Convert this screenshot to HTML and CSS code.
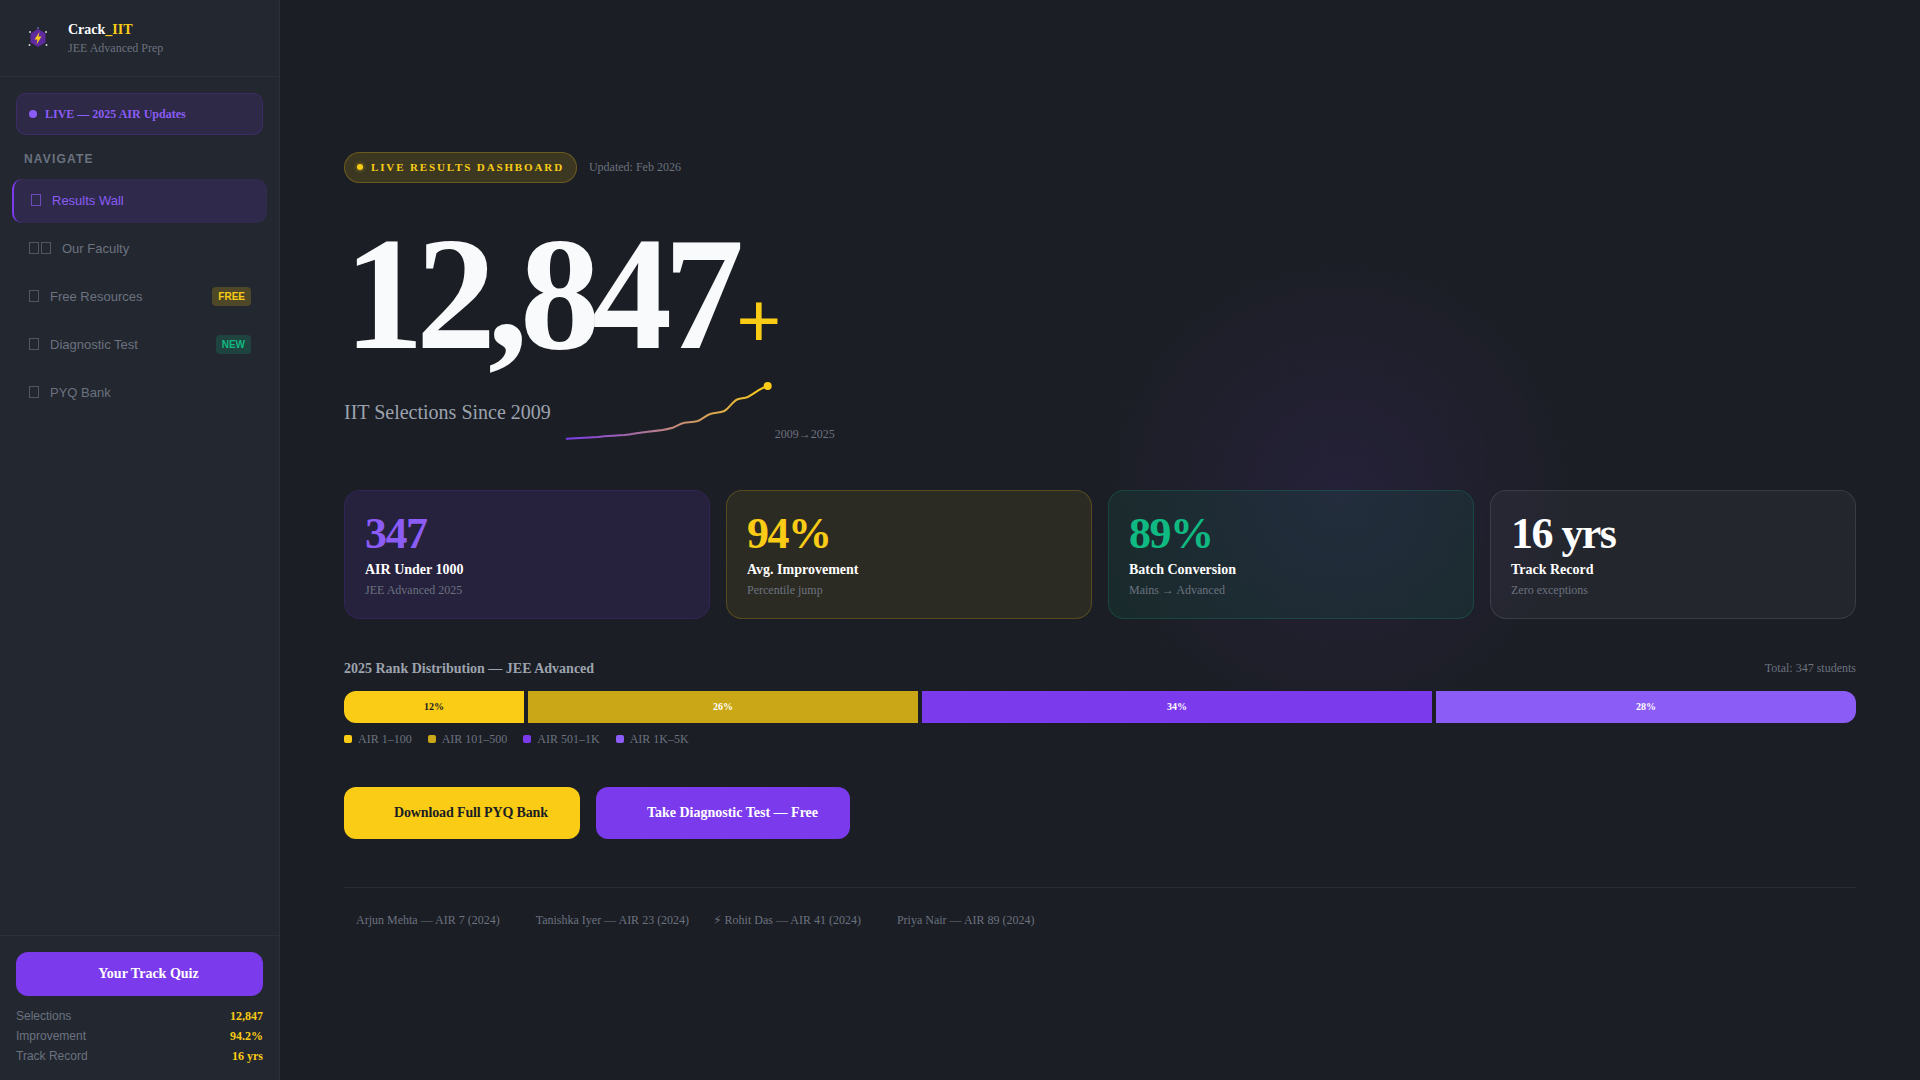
FILE: index.html
```html
<!DOCTYPE html>
<html lang="en">
<head>
    <meta charset="UTF-8">
    <title>Crack_IIT Results</title>
    <link rel="stylesheet" href="styles.css">
</head>
<body>
    <aside class="sidebar">
        <div class="brand">
            <svg class="brand-logo" viewBox="0 0 24 24" width="24" height="24">
                <polygon points="12,3 19.5,7.5 19.5,16.5 12,21 4.5,16.5 4.5,7.5" fill="#5f2a9e"/>
                <polygon points="13.5,6 8.5,13.5 11.5,13.5 10.5,18.5 15.5,10.5 12.5,10.5" fill="#facc15"/>
                <circle cx="4" cy="6" r="1" fill="#d1d5db"/>
                <circle cx="20" cy="6" r="1" fill="#d1d5db"/>
                <circle cx="3.5" cy="19" r="1" fill="#d1d5db"/>
                <circle cx="20.5" cy="19" r="1" fill="#d1d5db"/>
                <circle cx="12" cy="2" r="0.8" fill="#a78bfa"/>
            </svg>
            <div>
                <div class="brand-name">Crack<span class="yellow">_IIT</span></div>
                <div class="brand-sub">JEE Advanced Prep</div>
            </div>
        </div>

        <div class="live-box"><span class="live-dot"></span>LIVE — 2025 AIR Updates</div>

        <div class="nav-title">NAVIGATE</div>
        <nav class="nav">
            <a href="#" class="nav-item active"><span class="nav-icon"><i class="tofu"></i></span>Results Wall</a>
            <a href="#" class="nav-item"><span class="nav-icon"><i class="tofu"></i><i class="tofu"></i></span>Our Faculty</a>
            <a href="#" class="nav-item"><span class="nav-icon"><i class="tofu"></i></span>Free Resources<span class="badge badge-free">FREE</span></a>
            <a href="#" class="nav-item"><span class="nav-icon"><i class="tofu"></i></span>Diagnostic Test<span class="badge badge-new">NEW</span></a>
            <a href="#" class="nav-item"><span class="nav-icon"><i class="tofu"></i></span>PYQ Bank</a>
        </nav>

        <div class="side-footer">
            <button class="quiz-btn">Your Track Quiz</button>
            <div class="side-stat"><span>Selections</span><b>12,847</b></div>
            <div class="side-stat"><span>Improvement</span><b>94.2%</b></div>
            <div class="side-stat"><span>Track Record</span><b>16 yrs</b></div>
        </div>
    </aside>

    <main class="main">
        <div class="pill-row">
            <span class="pill"><span class="pill-dot"></span>LIVE RESULTS DASHBOARD</span>
            <span class="updated">Updated: Feb 2026</span>
        </div>

        <div class="hero-num">12,847<span class="hero-plus">+</span></div>

        <div class="hero-sub">
            <span class="hero-text">IIT Selections Since 2009</span>
            <svg class="spark" viewBox="0 0 208 60" width="208" height="60">
                <defs>
                    <linearGradient id="sparkGrad" x1="0" y1="0" x2="1" y2="0">
                        <stop offset="0" stop-color="#7c3aed"/>
                        <stop offset="1" stop-color="#facc15"/>
                    </linearGradient>
                </defs>
                <path d="M1.7 56.7 L32.7 55 C42 54 50 53.8 59.3 53 C68 52 74 50.5 82.7 49.7 C92 48.8 100 48 107.7 45.7 C112 44 115 41.5 119.3 40.7 C124 40 128 40.5 132.7 39 C138 37 141 33 146 31.7 C151 30.5 155 31 159.3 29 C165 26 167 19.5 172.7 17.3 C176 16 179 16.5 182.7 15 C189 12 195 6 202.7 4" fill="none" stroke="url(#sparkGrad)" stroke-width="2" stroke-linecap="round"/>
                <circle cx="202.7" cy="4" r="4" fill="#facc15"/>
            </svg>
            <span class="spark-label">2009→2025</span>
        </div>

        <section class="cards">
            <div class="card card-purple">
                <div class="card-num">347</div>
                <div class="card-label">AIR Under 1000</div>
                <div class="card-sub">JEE Advanced 2025</div>
            </div>
            <div class="card card-yellow">
                <div class="card-num">94%</div>
                <div class="card-label">Avg. Improvement</div>
                <div class="card-sub">Percentile jump</div>
            </div>
            <div class="card card-green">
                <div class="card-num">89%</div>
                <div class="card-label">Batch Conversion</div>
                <div class="card-sub">Mains → Advanced</div>
            </div>
            <div class="card card-white">
                <div class="card-num">16 yrs</div>
                <div class="card-label">Track Record</div>
                <div class="card-sub">Zero exceptions</div>
            </div>
        </section>

        <section class="dist">
            <div class="dist-head">
                <span class="dist-title">2025 Rank Distribution — JEE Advanced</span>
                <span class="dist-total">Total: 347 students</span>
            </div>
            <div class="dist-bar">
                <div class="seg seg-1" style="flex: 12">12%</div>
                <div class="seg seg-2" style="flex: 26">26%</div>
                <div class="seg seg-3" style="flex: 34">34%</div>
                <div class="seg seg-4" style="flex: 28">28%</div>
            </div>
            <div class="legend">
                <span class="legend-item"><i class="swatch seg-1"></i>AIR 1–100</span>
                <span class="legend-item"><i class="swatch seg-2"></i>AIR 101–500</span>
                <span class="legend-item"><i class="swatch seg-3"></i>AIR 501–1K</span>
                <span class="legend-item"><i class="swatch seg-4"></i>AIR 1K–5K</span>
            </div>
        </section>

        <div class="actions">
            <a href="#" class="btn btn-yellow">Download Full PYQ Bank</a>
            <a href="#" class="btn btn-purple">Take Diagnostic Test — Free</a>
        </div>

        <div class="toppers">
            <span class="topper blank">Arjun Mehta — AIR 7 (2024)</span>
            <span class="topper blank">Tanishka Iyer — AIR 23 (2024)</span>
            <span class="topper"><span class="bolt">⚡&#xFE0E;</span> Rohit Das — AIR 41 (2024)</span>
            <span class="topper blank">Priya Nair — AIR 89 (2024)</span>
        </div>
    </main>
</body>
</html>
```

FILE: styles.css
```css
* {
    box-sizing: border-box;
}
body {
    margin: 0;
    height: 1080px;
    display: flex;
    overflow: hidden;
    background-color: #1b1e24;
    font-family: "Liberation Serif", serif;
    color: #ffffff;
}
a {
    text-decoration: none;
}

/* Sidebar */
.sidebar {
    width: 280px;
    flex-shrink: 0;
    display: flex;
    flex-direction: column;
    background-color: #23272f;
    border-right: 1px solid #2c3038;
}
.brand {
    height: 77px;
    display: flex;
    align-items: center;
    gap: 18px;
    padding: 0 0 0 26px;
    border-bottom: 1px solid #2c3038;
}
.brand-name {
    padding-top: 1px;
    font-size: 14px;
    font-weight: bold;
    line-height: 18px;
}
.yellow {
    color: #facc15;
}
.brand-sub {
    font-size: 12px;
    line-height: 18px;
    color: #6b7280;
}
.live-box {
    margin: 16px 16px 0;
    height: 42px;
    display: flex;
    align-items: center;
    gap: 8px;
    padding-left: 12px;
    font-size: 12px;
    font-weight: bold;
    color: #8b5cf6;
    background-color: rgba(124, 58, 237, 0.12);
    border: 1px solid rgba(124, 58, 237, 0.2);
    border-radius: 10px;
}
.live-dot {
    width: 8px;
    height: 8px;
    border-radius: 50%;
    background-color: #8b5cf6;
}
.nav-title {
    margin: 17px 0 13px 24px;
    font-family: "Liberation Sans", sans-serif;
    font-size: 12px;
    font-weight: bold;
    letter-spacing: 0.1em;
    line-height: 14px;
    color: #6b7280;
}
.nav {
    display: flex;
    flex-direction: column;
    gap: 4px;
    padding: 0 12px;
}
.nav-item {
    height: 44px;
    display: flex;
    align-items: center;
    gap: 10px;
    padding: 0 16px 2px;
    font-family: "Liberation Sans", sans-serif;
    font-size: 13px;
    color: #6b7280;
    border-radius: 10px;
}
.nav-item.active {
    color: #8b5cf6;
    background-color: rgba(124, 58, 237, 0.15);
    border-left: 2px solid #7c3aed;
}
/* missing-glyph boxes */
.nav-icon {
    display: flex;
}
.tofu {
    display: block;
    width: 10px;
    height: 12px;
    margin: 0 1px;
    border: 1px solid currentColor;
    opacity: 0.65;
}
.badge {
    margin-left: auto;
    padding: 3px 6px;
    font-size: 10px;
    font-weight: bold;
    line-height: 13px;
    border-radius: 4px;
}
.badge-free {
    color: #facc15;
    background-color: rgba(250, 204, 21, 0.2);
}
.badge-new {
    color: #10b981;
    background-color: rgba(16, 185, 129, 0.2);
}
.side-footer {
    margin-top: auto;
    padding: 16px 16px 14px;
    border-top: 1px solid #2c3038;
}
.quiz-btn {
    width: 100%;
    height: 44px;
    margin-bottom: 10px;
    padding: 0 0 0 18px;
    border: none;
    border-radius: 12px;
    font-family: "Liberation Serif", serif;
    font-size: 14px;
    font-weight: bold;
    color: #ffffff;
    background-color: #7c3aed;
}
.side-stat {
    height: 20px;
    display: flex;
    align-items: center;
    justify-content: space-between;
    font-family: "Liberation Sans", sans-serif;
    font-size: 12px;
    color: #6b7280;
}
.side-stat b {
    font-family: "Liberation Serif", serif;
    color: #facc15;
}

/* Main */
.main {
    flex: 1;
    min-width: 0;
    display: flex;
    flex-direction: column;
    justify-content: center;
    padding: 0 64px;
    background-color: #1b1e24;
    background-image:
        radial-gradient(circle 260px at 1060px 490px, rgba(124, 58, 237, 0.1), rgba(124, 58, 237, 0) 100%),
        linear-gradient(rgba(255, 255, 255, 0.005) 1px, transparent 1px),
        linear-gradient(90deg, rgba(255, 255, 255, 0.005) 1px, transparent 1px);
    background-size: auto, 40px 40px, 40px 40px;
}
.pill-row {
    display: flex;
    align-items: center;
    gap: 12px;
}
.pill {
    height: 31px;
    display: flex;
    align-items: center;
    gap: 8px;
    padding: 0 12px;
    font-size: 11px;
    font-weight: bold;
    letter-spacing: 0.17em;
    color: #facc15;
    background-color: rgba(250, 204, 21, 0.15);
    border: 1px solid rgba(250, 204, 21, 0.25);
    border-radius: 999px;
}
.pill-dot {
    width: 6px;
    height: 6px;
    border-radius: 50%;
    background-color: #facc15;
    box-shadow: 0 0 4px rgba(250, 204, 21, 0.6);
}
.updated {
    font-size: 12px;
    color: #6b7280;
}
.hero-num {
    margin-top: 31px;
    font-size: 160px;
    font-weight: bold;
    line-height: 160px;
    letter-spacing: -0.05em;
    color: #f8fafc;
}
.hero-plus {
    font-size: 80px;
    line-height: 0;
    letter-spacing: 0;
    color: #facc15;
}
.hero-sub {
    margin-top: 8px;
    display: flex;
    align-items: center;
    gap: 14px;
}
.hero-text {
    padding-top: 2px;
    font-size: 20px;
    color: #9ca3af;
}
.spark {
    display: block;
}
.spark-label {
    align-self: flex-end;
    margin-left: -12px;
    font-size: 12px;
    color: #6b7280;
}
.cards {
    margin-top: 48px;
    display: grid;
    grid-template-columns: repeat(4, 1fr);
    gap: 16px;
}
.card {
    height: 129px;
    padding: 21px 20px 20px;
    border: 1px solid;
    border-radius: 16px;
}
.card-purple {
    background-color: rgba(124, 58, 237, 0.12);
    border-color: rgba(124, 58, 237, 0.15);
}
.card-purple .card-num {
    color: #8b5cf6;
}
.card-yellow {
    background-color: rgba(250, 204, 21, 0.08);
    border-color: rgba(250, 204, 21, 0.2);
}
.card-yellow .card-num {
    color: #facc15;
}
.card-green {
    background-color: rgba(16, 185, 129, 0.08);
    border-color: rgba(16, 185, 129, 0.2);
}
.card-green .card-num {
    color: #10b981;
}
.card-white {
    background-color: rgba(255, 255, 255, 0.04);
    border-color: rgba(255, 255, 255, 0.1);
}
.card-num {
    font-size: 44px;
    font-weight: bold;
    line-height: 44px;
    letter-spacing: -0.035em;
}
.card-label {
    margin-top: 6px;
    font-size: 14px;
    font-weight: bold;
    line-height: 16px;
}
.card-sub {
    margin-top: 5px;
    font-size: 12px;
    line-height: 14px;
    color: #6b7280;
}
.dist {
    margin-top: 41px;
}
.dist-head {
    display: flex;
    align-items: center;
    justify-content: space-between;
    margin-bottom: 13px;
}
.dist-title {
    font-size: 14px;
    font-weight: bold;
    line-height: 18px;
    color: #9ca3af;
}
.dist-total {
    font-size: 12px;
    color: #6b7280;
}
.dist-bar {
    height: 32px;
    display: flex;
    gap: 4px;
    border-radius: 12px;
    overflow: hidden;
}
.seg {
    display: flex;
    align-items: center;
    justify-content: center;
    min-width: 0;
    font-size: 10px;
    font-weight: bold;
}
.seg-1 {
    background-color: #facc15;
    color: #1a1d23;
}
.seg-2 {
    background-color: #c9a716;
}
.seg-3 {
    background-color: #7c3aed;
}
.seg-4 {
    background-color: #8b5cf6;
}
.legend {
    margin-top: 9px;
    display: flex;
    gap: 16px;
    font-size: 12px;
    line-height: 14px;
    color: #6b7280;
}
.legend-item {
    display: flex;
    align-items: center;
    gap: 6px;
}
.swatch {
    width: 8px;
    height: 8px;
    border-radius: 2px;
}
.actions {
    margin-top: 41px;
    display: flex;
    gap: 16px;
}
.btn {
    height: 52px;
    display: flex;
    align-items: center;
    padding: 0 32px 0 50px;
    font-size: 14px;
    font-weight: bold;
    border-radius: 12px;
}
.btn-yellow {
    letter-spacing: -0.13px;
    color: #1a1d23;
    background-color: #facc15;
}
.btn-purple {
    padding-left: 51px;
    color: #ffffff;
    background-color: #7c3aed;
}
.toppers {
    margin-top: 48px;
    margin-bottom: 1px;
    padding-top: 24px;
    display: flex;
    gap: 24px;
    border-top: 1px solid rgba(255, 255, 255, 0.06);
    font-size: 12px;
    line-height: 16px;
    color: #6b7280;
}
.topper.blank {
    padding-left: 12px;
}
.bolt {
    font-family: "DejaVu Sans", sans-serif;
}
```
